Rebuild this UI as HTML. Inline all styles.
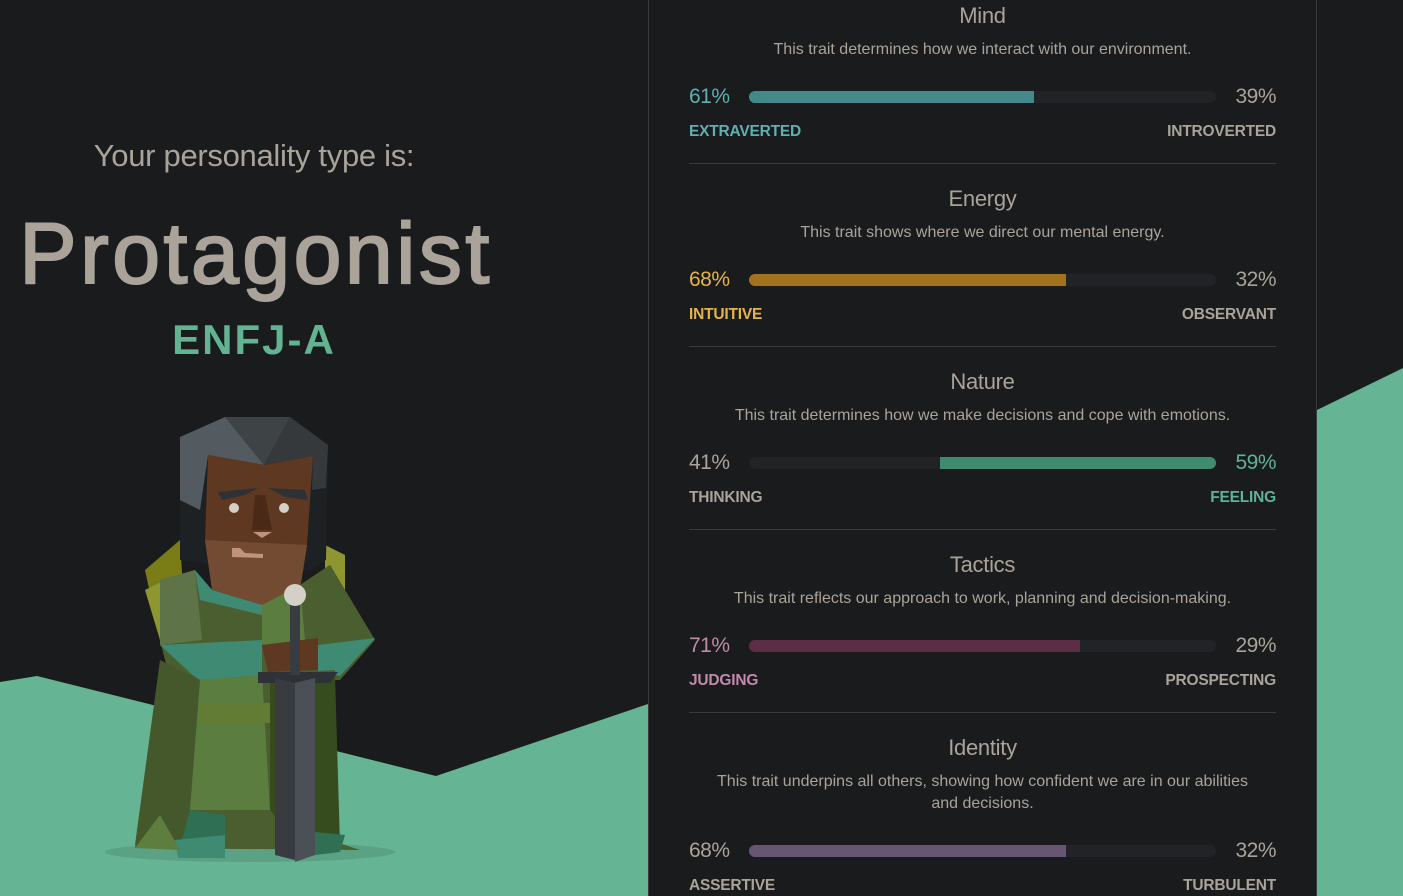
<!DOCTYPE html>
<html><head><meta charset="utf-8"><style>
*{margin:0;padding:0;box-sizing:border-box}
html,body{width:1403px;height:896px;overflow:hidden}
body{background:#1a1b1d;font-family:"Liberation Sans",sans-serif;position:relative;color:#aaa39a}
.bg{position:absolute;left:0;top:0}
.panel{position:absolute;left:648px;top:-2px;width:669px;height:898px;background:#1a1b1d;border:1px solid #3a3b3e;border-bottom:none}
.t{position:absolute;left:0;width:667px;text-align:center;color:#aaa39a}
.h{font-size:22px;letter-spacing:-0.3px}
.d{font-size:16px;letter-spacing:0;line-height:22px}
.pct{position:absolute;font-size:21px;letter-spacing:-0.5px}
.lab{position:absolute;font-size:15.5px;font-weight:bold;letter-spacing:-0.2px}
.track{position:absolute;left:100px;width:467px;height:12px;border-radius:6px;background:#222326;overflow:hidden}
.fill{position:absolute;top:0;height:12px}
.hr{position:absolute;left:40px;width:587px;height:1px;background:#3a3b3e}
</style></head><body>
<svg class="bg" width="1403" height="896">
<polygon points="0,682 37,676 436,776 648,704 648,896 0,896" fill="#65b493"/>
<polygon points="1317,410 1403,368 1403,896 1317,896" fill="#65b493"/>
<ellipse cx="250" cy="852" rx="145" ry="10" fill="#5aa283"/>
<polygon points="145,570 180,540 185,620 160,640" fill="#7a7c15"/>
<polygon points="145,590 165,580 165,625 160,640" fill="#8e9630"/>
<polygon points="325,545 345,555 345,590 325,600" fill="#8e9630"/>
<polygon points="180,437 225,417 290,417 328,445 326,560 310,570 250,570 180,560" fill="#1e2123"/>
<polygon points="180,437 225,417 264,465 208,455 200,510 180,500" fill="#545b60"/>
<polygon points="225,417 290,417 264,465" fill="#3e4346"/>
<polygon points="290,417 328,445 326,488 312,490 313,456 264,465" fill="#35393c"/>
<polygon points="208,455 264,465 313,456 307,545 300,590 262,605 212,590 205,540" fill="#5e3820"/>
<polygon points="205,540 307,545 300,590 262,605 212,590" fill="#734b32"/>
<polygon points="218,492 258,488 245,495 222,500" fill="#2e3236"/>
<polygon points="268,488 305,490 308,500 285,497" fill="#2e3236"/>
<polygon points="255,495 265,495 272,530 252,530" fill="#4a2a16"/>
<polygon points="253,532 272,532 262,538" fill="#c0947c"/>
<polygon points="232,548 240,548 245,553 263,554 263,558 232,557" fill="#c0947c"/>
<circle cx="234" cy="508" r="5" fill="#d4d0c8"/><circle cx="284" cy="508" r="5" fill="#d4d0c8"/>
<polygon points="160,580 195,570 212,590 262,605 300,585 330,565 375,640 340,680 170,680 160,640" fill="#4a5e30"/>
<polygon points="160,580 195,570 202,640 160,645" fill="#5e7448"/>
<polygon points="262,605 300,585 305,640 262,645" fill="#5b7e40"/>
<polygon points="300,585 330,565 375,640 320,645" fill="#4a5e30"/>
<polygon points="195,570 212,590 262,605 262,615 200,600" fill="#3e8a72"/>
<polygon points="160,645 262,640 262,645 262,680 200,682" fill="#3e8a72"/>
<polygon points="318,645 375,638 340,676 318,672" fill="#3e8a72"/>
<polygon points="262,645 318,638 318,670 268,672" fill="#5e3820"/>
<polygon points="170,660 200,680 262,675 335,670 330,840 360,850 135,848 160,700" fill="#4a5e30"/>
<polygon points="160,660 200,680 195,810 180,850 135,845" fill="#44582c"/>
<polygon points="200,680 262,675 270,810 190,810" fill="#5b7e40"/>
<polygon points="200,703 275,703 275,723 200,723" fill="#627c34"/>
<polygon points="270,680 335,675 340,845 300,850 270,810" fill="#364c1e"/>
<polygon points="190,810 225,815 225,850 178,855" fill="#2f7055"/>
<polygon points="175,840 225,835 225,858 178,858" fill="#3e8a72"/>
<polygon points="135,848 160,815 180,850" fill="#5e7e40"/>
<polygon points="315,832 345,835 340,852 315,855" fill="#2f7055"/>
<polygon points="258,672 338,672 330,683 258,683" fill="#2e3236"/>
<polygon points="275,678 295,683 295,860 275,855" fill="#383c40"/>
<polygon points="295,683 315,678 315,855 295,862" fill="#4a5055"/>
<rect x="290" y="600" width="10" height="75" fill="#383c40"/>
<circle cx="295" cy="595" r="11" fill="#d4d0c8"/>
</svg>
<div style="position:absolute;left:0;width:508px;top:138px;text-align:center;font-size:31px;color:#aaa39a;letter-spacing:-0.3px">Your personality type is:</div>
<div style="position:absolute;left:0;width:508px;top:205px;text-align:center;font-size:86px;color:#aaa39a;-webkit-text-stroke:2px #aaa39a;letter-spacing:3.5px;text-indent:4px">Protagonist</div>
<div style="position:absolute;left:0;width:508px;top:316px;text-align:center;font-size:42px;font-weight:bold;color:#62b392;letter-spacing:2px">ENFJ-A</div>

<div class="panel">
<div class="t h" style="top:4px">Mind</div>
<div class="t d" style="top:40px">This trait determines how we interact with our environment.</div>
<div class="pct" style="left:40px;top:86px;color:#5fb0b0">61%</div>
<div class="track" style="top:92px"><div class="fill" style="width:285px;background:#43898a"></div></div>
<div class="pct" style="right:40px;top:86px">39%</div>
<div class="lab" style="left:40px;top:124px;color:#5fb0b0">EXTRAVERTED</div>
<div class="lab" style="right:40px;top:124px">INTROVERTED</div>
<div class="hr" style="top:164px"></div>
<div class="t h" style="top:187px">Energy</div>
<div class="t d" style="top:223px">This trait shows where we direct our mental energy.</div>
<div class="pct" style="left:40px;top:269px;color:#e6b34a">68%</div>
<div class="track" style="top:275px"><div class="fill" style="width:317px;background:#a2721f"></div></div>
<div class="pct" style="right:40px;top:269px">32%</div>
<div class="lab" style="left:40px;top:307px;color:#e6b34a">INTUITIVE</div>
<div class="lab" style="right:40px;top:307px">OBSERVANT</div>
<div class="hr" style="top:347px"></div>
<div class="t h" style="top:370px">Nature</div>
<div class="t d" style="top:406px">This trait determines how we make decisions and cope with emotions.</div>
<div class="pct" style="left:40px;top:452px">41%</div>
<div class="track" style="top:458px"><div class="fill" style="left:191px;width:276px;background:#3f8b6f"></div></div>
<div class="pct" style="right:40px;top:452px;color:#5fb394">59%</div>
<div class="lab" style="left:40px;top:490px">THINKING</div>
<div class="lab" style="right:40px;top:490px;color:#5fb394">FEELING</div>
<div class="hr" style="top:530px"></div>
<div class="t h" style="top:553px">Tactics</div>
<div class="t d" style="top:589px">This trait reflects our approach to work, planning and decision-making.</div>
<div class="pct" style="left:40px;top:635px;color:#c08aa8">71%</div>
<div class="track" style="top:641px"><div class="fill" style="width:331px;background:#5c2e45"></div></div>
<div class="pct" style="right:40px;top:635px">29%</div>
<div class="lab" style="left:40px;top:673px;color:#c08aa8">JUDGING</div>
<div class="lab" style="right:40px;top:673px">PROSPECTING</div>
<div class="hr" style="top:713px"></div>
<div class="t h" style="top:736px">Identity</div>
<div class="t d" style="top:772px;left:40px;width:587px">This trait underpins all others, showing how confident we are in our abilities<br>and decisions.</div>
<div class="pct" style="left:40px;top:840px">68%</div>
<div class="track" style="top:846px"><div class="fill" style="width:317px;background:#665573"></div></div>
<div class="pct" style="right:40px;top:840px">32%</div>
<div class="lab" style="left:40px;top:878px">ASSERTIVE</div>
<div class="lab" style="right:40px;top:878px">TURBULENT</div>
</div>
</body></html>
